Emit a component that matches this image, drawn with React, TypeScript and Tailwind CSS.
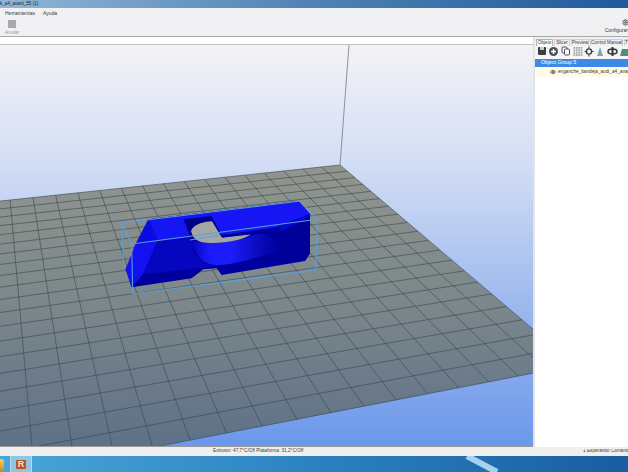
import { Eye, Settings } from "lucide-react";

type Point = [number, number];

// line through a-b crossed with line through c-d
function cross(a: Point, b: Point, c: Point, d: Point): Point {
  const d1x = b[0] - a[0];
  const d1y = b[1] - a[1];
  const d2x = d[0] - c[0];
  const d2y = d[1] - c[1];
  const t = ((c[0] - a[0]) * d2y - (c[1] - a[1]) * d2x) / (d1x * d2y - d1y * d2x);
  return [a[0] + d1x * t, a[1] + d1y * t];
}

const vpDepth: Point = [-20, -141];
const vpWidth: Point = [3100, -128];
const backRight: Point = [340, 165];
const frontRight: Point = [575, 365];
const CELLS = 20;

// points along an edge, evenly spaced on the bed, so perspective-spaced on screen
function along(from: Point, to: Point, vp: Point, i: number): Point {
  const a = 1 / (from[0] - vp[0]);
  const b = 1 / (to[0] - vp[0]);
  const v = vp[0] + 1 / (a + (b - a) * (i / CELLS));
  const f = (v - from[0]) / (to[0] - from[0]);
  return [from[0] + (to[0] - from[0]) * f, from[1] + (to[1] - from[1]) * f];
}

const backLeft: Point = [-85, 210];
const frontLeft = cross(frontRight, vpWidth, backLeft, vpDepth);

const depthLines = Array.from({ length: CELLS + 1 }, (_, i) => {
  const top = along(backRight, backLeft, vpWidth, i);
  return [top, cross(top, vpDepth, frontRight, frontLeft)] as [Point, Point];
});
const widthLines = Array.from({ length: CELLS + 1 }, (_, i) => {
  const right = along(backRight, frontRight, vpDepth, i);
  return [right, cross(right, vpWidth, backLeft, frontLeft)] as [Point, Point];
});

function BuildScene() {
  const plate = [backRight, frontRight, frontLeft, backLeft].map((p) => p.join(",")).join(" ");
  return (
    <svg className="block h-full w-full" viewBox="0 0 533 401" preserveAspectRatio="none">
      <defs>
        <linearGradient id="sky" x1="0" y1="0" x2="0" y2="1">
          <stop offset="0" stopColor="#f3f3f7" />
          <stop offset="0.3" stopColor="#d2ddf5" />
          <stop offset="0.63" stopColor="#9fbbee" />
          <stop offset="1" stopColor="#6b98ec" />
        </linearGradient>
        <linearGradient id="bed" gradientUnits="userSpaceOnUse" x1="0" y1="165" x2="0" y2="445">
          <stop offset="0" stopColor="#91958e" />
          <stop offset="0.5" stopColor="#7b878b" />
          <stop offset="1" stopColor="#5f7188" />
        </linearGradient>
        <linearGradient id="band" x1="0" y1="0" x2="1" y2="0">
          <stop offset="0" stopColor="#0505b4" />
          <stop offset="0.2" stopColor="#1a1aff" />
          <stop offset="0.45" stopColor="#1c1cf8" />
          <stop offset="0.8" stopColor="#0808b8" />
          <stop offset="1" stopColor="#00009c" />
        </linearGradient>
      </defs>
      <rect width="533" height="401" fill="url(#sky)" />
      <g transform="translate(0 -45)">
        <line x1="349" y1="45" x2="340" y2="165" stroke="#777b80" strokeWidth="0.8" />
        <polygon points={plate} fill="url(#bed)" />
        {depthLines.map(([a, b], i) => (
          <line key={`d${i}`} x1={a[0]} y1={a[1]} x2={b[0]} y2={b[1]} stroke="#3a464c" strokeWidth="0.6" />
        ))}
        {widthLines.map(([a, b], i) => (
          <line key={`w${i}`} x1={a[0]} y1={a[1]} x2={b[0]} y2={b[1]} stroke="#3a464c" strokeWidth="0.6" />
        ))}
        <g transform="translate(110 190) scale(0.3333)">
          {/* silhouette */}
          <polygon points="115,88 565,33 600,72 600,190 585,213 335,255 320,235 280,238 245,265 65,292 47,238" fill="#00009c" />
          {/* top face */}
          <polygon points="115,88 565,33 600,72 500,112 335,135 248,145 143,152" fill="#1616f4" />
          <polygon points="115,88 143,152 75,165" fill="#0a0ae4" />
          {/* left slope */}
          <polygon points="75,165 143,152 100,252 65,292 47,238" fill="#1212f0" />
          <polygon points="143,152 250,135 250,185 285,222 330,228 100,252" fill="#0606c0" />
          {/* curved band */}
          <path d="M245 150 C280 165 380 160 430 135 C470 125 495 140 508 180 C440 205 380 222 325 226 C285 225 255 205 245 150 Z" fill="url(#band)" />
          {/* right wall */}
          <polygon points="600,72 600,190 585,213 520,205 505,175 490,135 505,110" fill="#00009a" />
          <polygon points="505,110 600,72 600,82 515,122" fill="#0808c8" />
          {/* hole */}
          <polygon points="220,88 305,78 335,135 245,150" fill="#00008c" />
          <path d="M243 122 C255 100 285 95 306 94 L335 142 L424 133 C400 150 340 162 290 158 C265 156 250 150 243 122 Z" fill="#a3a6a3" />
          <line x1="240" y1="150" x2="330" y2="135" stroke="#5aa0dc" strokeWidth="3" />
          <polygon points="335,135 430,126 424,133 337,143" fill="#00009c" />
          {/* build volume box */}
          <g fill="none" stroke="#5aa0dc" strokeWidth="3.2">
            <polyline points="110,90 35,97 65,162 68,312 618,240 622,88 570,33" />
            <line x1="65" y1="162" x2="622" y2="88" />
            <line x1="35" y1="97" x2="42" y2="235" />
            <line x1="110" y1="90" x2="570" y2="33" />
          </g>
        </g>
      </g>
    </svg>
  );
}

function PanelIcons() {
  return (
    <svg className="block" width="93" height="13" viewBox="0 0 93 13">
      <rect x="3" y="1" width="8" height="8" rx="1" fill="#3c3f44" />
      <rect x="5" y="1" width="4" height="3" fill="#c8cacd" />
      <circle cx="18.5" cy="5.5" r="4.5" fill="#4a4d52" />
      <path d="M18.5 3v5M16 5.5h5" stroke="#fff" strokeWidth="1.5" />
      <rect x="27" y="1" width="5" height="6" rx="1" fill="#fff" stroke="#4a4d52" />
      <rect x="29.5" y="3" width="5" height="6" rx="1" fill="#fff" stroke="#4a4d52" />
      {[0, 1, 2, 3].map((r) =>
        [0, 1, 2, 3].map((c) => <rect key={`${r}${c}`} x={38.5 + c * 2.4} y={1 + r * 2.4} width="1.7" height="1.7" fill="#a0a2a6" />),
      )}
      <circle cx="54" cy="5.5" r="2.6" fill="none" stroke="#3d4045" strokeWidth="1.4" />
      <path d="M54 0.5v2M54 8.5v2M49.5 5.5h2M56.5 5.5h2" stroke="#3d4045" strokeWidth="1.1" />
      <path d="M65 1 L68 10 H62 Z" fill="#7fa6b8" />
      <ellipse cx="77.5" cy="5.5" rx="4.5" ry="2.5" fill="none" stroke="#33373c" strokeWidth="1.5" />
      <path d="M77.5 1v9" stroke="#33373c" strokeWidth="2" />
      <path d="M85 10 L87 3 H93 V10 Z" fill="#4d8f7a" />
    </svg>
  );
}

export default function App() {
  return (
    <div className="flex h-[472px] w-[628px] flex-col overflow-hidden bg-[#f1f1f4] font-['Liberation_Sans',sans-serif] text-[5px] leading-none text-[#3a3a3a]">
      {/* title bar */}
      <div className="flex h-[8px] items-center bg-gradient-to-r from-[#8fb6d8] via-[#4f82b4] to-[#1f5a9c] text-[#222]">
        <span className="text-[4.6px]">k_a4_avant_55 (1)</span>
      </div>
      {/* menu */}
      <div className="flex h-[11px] items-center gap-[8px] bg-[#f1f1f4] pl-[5px]">
        <span>Herramientas</span>
        <span>Ayuda</span>
      </div>
      {/* toolbar */}
      <div className="flex h-[18px] items-start justify-between border-b border-[#a8a8a8] bg-[#f1f1f4]">
        <div className="ml-[5px] flex w-[14px] flex-col items-center text-[#9a9a9a]">
          <div className="mt-[1px] h-[8px] w-[8px] bg-[#a9a9ab]" />
          <span className="mt-[2px]">Anular</span>
        </div>
        <div className="flex w-[24px] flex-col items-end">
          <Settings size={7} strokeWidth={3} className="mr-[-1px] text-[#444]" />
          <span className="mt-[2px] whitespace-nowrap">Configurar</span>
        </div>
      </div>

      <div className="flex min-h-0 flex-1">
        <div className="flex min-w-0 flex-1 flex-col border-b border-[#999]">
          <div className="h-[8px] shrink-0 border-b border-[#bdbdbd] bg-white" />
          <div className="min-h-0 flex-1">
            <BuildScene />
          </div>
        </div>
        <div className="flex w-[95px] flex-col border-l-2 border-[#e4e4e6] bg-white">
          <div className="flex h-[9px] items-end bg-[#f1f1f4] pl-[1px] text-[4.6px]">
            <span className="w-[17px] border border-b-0 border-[#b4b4b4] bg-white pt-[1px] text-center">Objeto</span>
            <span className="ml-[1px] w-[16px] border border-b-0 border-[#d0d0d0] pt-[1px] text-center">Slicer</span>
            <span className="ml-[1px] w-[18px] border border-b-0 border-[#d0d0d0] pt-[1px] text-center">Preview</span>
            <span className="ml-[1px] w-[33px] border border-b-0 border-[#d0d0d0] pt-[1px] text-center whitespace-nowrap">Control Manual</span>
            <span className="ml-[1px] w-[4px] border-l border-t border-[#d0d0d0] pt-[1px]">T</span>
          </div>
          <div className="bg-[#f5f5f5]">
            <PanelIcons />
          </div>
          <div className="flex h-[8px] items-center bg-[#3d8ae6] pl-[6px] text-[5.2px] text-white">Object Group 5</div>
          <div className="flex h-[10px] items-center gap-[2px] overflow-hidden bg-[#fffbe8] pl-[15px] text-[4.7px] whitespace-nowrap">
            <Eye size={6} strokeWidth={3} className="shrink-0 text-[#444]" />
            <span>enganche_bandeja_audi_a4_avant</span>
          </div>
        </div>
      </div>

      {/* status */}
      <div className="flex h-[9px] items-center justify-between bg-[#efefef] pl-[213px] text-[4.7px]">
        <span>Extrusor: 47,7°C/Off Plataforma: 31,2°C/Off</span>
        <span className="w-[45px] overflow-hidden whitespace-nowrap">1 Esperando Comando</span>
      </div>

      {/* taskbar */}
      <div className="relative flex h-[16px] items-center overflow-hidden bg-gradient-to-r from-[#4aa6d8] via-[#2b82c0] to-[#1a5da0]">
        <div className="mt-[2px] h-[12px] w-[4px] rounded-r-[3px] bg-gradient-to-b from-[#f2d060] to-[#d08a2c]" />
        <div className="ml-[6px] flex h-full w-[22px] items-center justify-center border-x border-[#b4dcf0] bg-[#8fc6e4]">
          <span className="rounded-[1px] bg-[#b8552c] px-[2px] text-[9px] font-bold text-[#f4e2c8]">R</span>
        </div>
        <div className="absolute left-[479px] top-[-9px] h-[34px] w-[6px] -rotate-[62deg] bg-[#a6d2ec]" />
      </div>
    </div>
  );
}
